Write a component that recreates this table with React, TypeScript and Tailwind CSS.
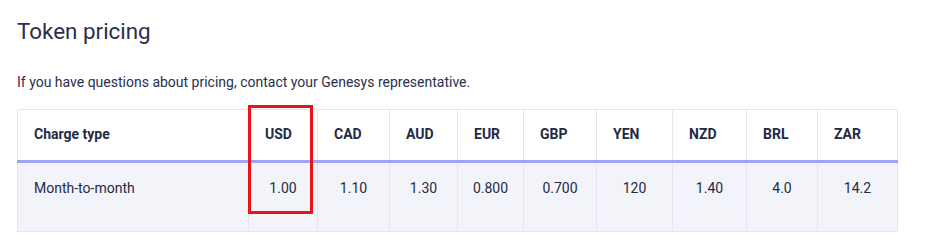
import React from "react";

const cols = [
  { label: "USD", value: "1.00", w: "w-[69px]" },
  { label: "CAD", value: "1.10", w: "w-[72px]" },
  { label: "AUD", value: "1.30", w: "w-[68px]" },
  { label: "EUR", value: "0.800", w: "w-[66px]" },
  { label: "GBP", value: "0.700", w: "w-[73px]" },
  { label: "YEN", value: "120", w: "w-[76px]" },
  { label: "NZD", value: "1.40", w: "w-[74px]" },
  { label: "BRL", value: "4.0", w: "w-[71px]" },
  { label: "ZAR", value: "14.2", w: "w-[80px]" },
];

const App = () => {
  return (
    <div className="w-[930px] h-[244px] bg-white pl-[17px] pt-[16px] font-['Roboto',sans-serif] text-[#222b45]">
      <h1 className="text-[22.4px] leading-[30px] text-[#2a2f4a]">Token pricing</h1>
      <p className="mt-[26px] text-[14px] leading-[20px] text-[#2a2f4a]">
        If you have questions about pricing, contact your Genesys representative.
      </p>
      <div className="relative mt-[17px] w-[880px]">
        <table className="w-[880px] table-fixed border-collapse text-[14px] leading-[20px]">
          <thead>
            <tr className="border-b-[3px] border-b-[#9fa3f3]">
              <th className="w-[231px] border border-[#e6e6f2] border-b-[#9fa3f3] pl-[16px] pt-[14px] pb-[16px] text-left font-bold">
                Charge type
              </th>
              {cols.map((c) => (
                <th
                  key={c.label}
                  className={`${c.w} border border-[#e6e6f2] border-b-[#9fa3f3] pl-[16px] pt-[14px] pb-[16px] text-left font-bold`}
                >
                  {c.label}
                </th>
              ))}
            </tr>
          </thead>
          <tbody>
            <tr className="bg-[#f3f4fa]">
              <td className="border border-[#e6e6f2] border-t-0 pl-[16px] pt-[15px] pb-[33px] text-left">
                Month-to-month
              </td>
              {cols.map((c) => (
                <td
                  key={c.label}
                  className="border border-[#e6e6f2] border-t-0 pt-[15px] pb-[33px] text-center"
                >
                  {c.value}
                </td>
              ))}
            </tr>
          </tbody>
        </table>
        <div className="absolute left-[231px] top-[-4px] w-[65px] h-[109px] border-[3px] border-[#e8141a]" />
      </div>
    </div>
  );
};

export default App;
